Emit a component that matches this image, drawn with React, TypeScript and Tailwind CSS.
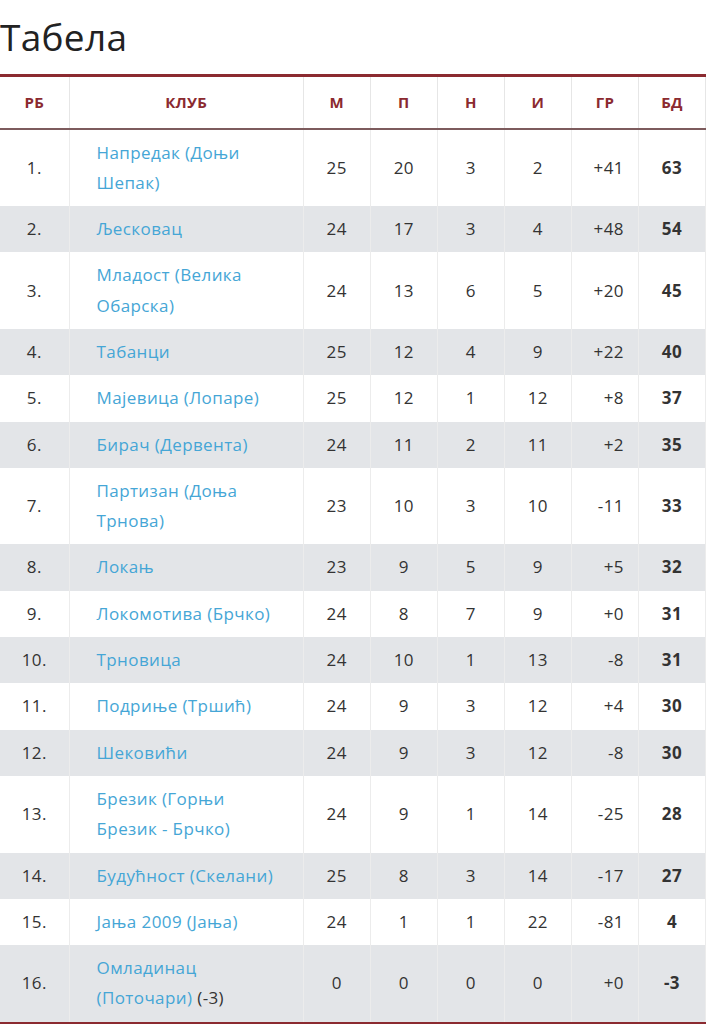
import React from "react";

type Row = {
  rank: string;
  club: string;
  note?: string;
  m: number;
  w: number;
  d: number;
  l: number;
  gd: string;
  pts: number;
};

const rows: Row[] = [
  { rank: "1.", club: "Напредак (Доњи Шепак)", m: 25, w: 20, d: 3, l: 2, gd: "+41", pts: 63 },
  { rank: "2.", club: "Љесковац", m: 24, w: 17, d: 3, l: 4, gd: "+48", pts: 54 },
  { rank: "3.", club: "Младост (Велика Обарска)", m: 24, w: 13, d: 6, l: 5, gd: "+20", pts: 45 },
  { rank: "4.", club: "Табанци", m: 25, w: 12, d: 4, l: 9, gd: "+22", pts: 40 },
  { rank: "5.", club: "Мајевица (Лопаре)", m: 25, w: 12, d: 1, l: 12, gd: "+8", pts: 37 },
  { rank: "6.", club: "Бирач (Дервента)", m: 24, w: 11, d: 2, l: 11, gd: "+2", pts: 35 },
  { rank: "7.", club: "Партизан (Доња Трнова)", m: 23, w: 10, d: 3, l: 10, gd: "-11", pts: 33 },
  { rank: "8.", club: "Локањ", m: 23, w: 9, d: 5, l: 9, gd: "+5", pts: 32 },
  { rank: "9.", club: "Локомотива (Брчко)", m: 24, w: 8, d: 7, l: 9, gd: "+0", pts: 31 },
  { rank: "10.", club: "Трновица", m: 24, w: 10, d: 1, l: 13, gd: "-8", pts: 31 },
  { rank: "11.", club: "Подриње (Тршић)", m: 24, w: 9, d: 3, l: 12, gd: "+4", pts: 30 },
  { rank: "12.", club: "Шековићи", m: 24, w: 9, d: 3, l: 12, gd: "-8", pts: 30 },
  { rank: "13.", club: "Брезик (Горњи Брезик - Брчко)", m: 24, w: 9, d: 1, l: 14, gd: "-25", pts: 28 },
  { rank: "14.", club: "Будућност (Скелани)", m: 25, w: 8, d: 3, l: 14, gd: "-17", pts: 27 },
  { rank: "15.", club: "Јања 2009 (Јања)", m: 24, w: 1, d: 1, l: 22, gd: "-81", pts: 4 },
  { rank: "16.", club: "Омладинац (Поточари)", note: "(-3)", m: 0, w: 0, d: 0, l: 0, gd: "+0", pts: -3 },
];

const headers = ["РБ", "КЛУБ", "М", "П", "Н", "И", "ГР", "БД"];
const widths = ["w-[69px]", "w-[234px]", "w-[67px]", "w-[67px]", "w-[67px]", "w-[67px]", "w-[67px]", "w-[67px]"];

export default function App() {
  return (
    <div className="w-[707px] bg-white font-['Open_Sans',sans-serif] text-[#333]">
      {/* Title */}
      <h1 className="pt-[14px] pb-[15px] text-[37px] leading-[45px] text-[#222] tracking-[0.3px]">Табела</h1>

      <table className="w-[706px] table-fixed border-collapse border-t-[3px] border-b-[3px] border-t-[#8b2a30] border-b-[#8b2a30]">
        <colgroup>
          {widths.map((w, i) => (
            <col key={i} className={w} />
          ))}
        </colgroup>
        <thead>
          <tr className="h-[53px] border-b-2 border-b-[#7d5b5d]">
            {headers.map((h, i) => (
              <th
                key={h}
                className={
                  "border-l border-[#e6e6e6] text-center text-[15px] font-bold tracking-[0.3px] text-[#8b2a30] " +
                  (i === 0 ? "border-l-0" : "") +
                  (i === headers.length - 1 ? " border-r" : "")
                }
              >
                {h}
              </th>
            ))}
          </tr>
        </thead>
        <tbody className="text-[17px] leading-[30.3px] tracking-[0.4px]">
          {rows.map((r, idx) => (
            <tr key={r.rank} className={idx % 2 === 1 ? "bg-[#e3e5e8]" : "bg-white"}>
              <td className="py-2 text-center">{r.rank}</td>
              <td className="border-l border-[#ececec] py-2 pl-[27px] pr-[24px]">
                <a className="text-[#45a6d6]">{r.club}</a>
                {r.note && <span className="text-[#333]"> {r.note}</span>}
              </td>
              <td className="border-l border-[#ececec] py-2 text-center">{r.m}</td>
              <td className="border-l border-[#ececec] py-2 text-center">{r.w}</td>
              <td className="border-l border-[#ececec] py-2 text-center">{r.d}</td>
              <td className="border-l border-[#ececec] py-2 text-center">{r.l}</td>
              <td className="border-l border-[#ececec] py-2 pr-[14px] text-right">{r.gd}</td>
              <td className="border-l border-r border-[#ececec] py-2 text-center font-bold">{r.pts}</td>
            </tr>
          ))}
        </tbody>
      </table>
    </div>
  );
}
